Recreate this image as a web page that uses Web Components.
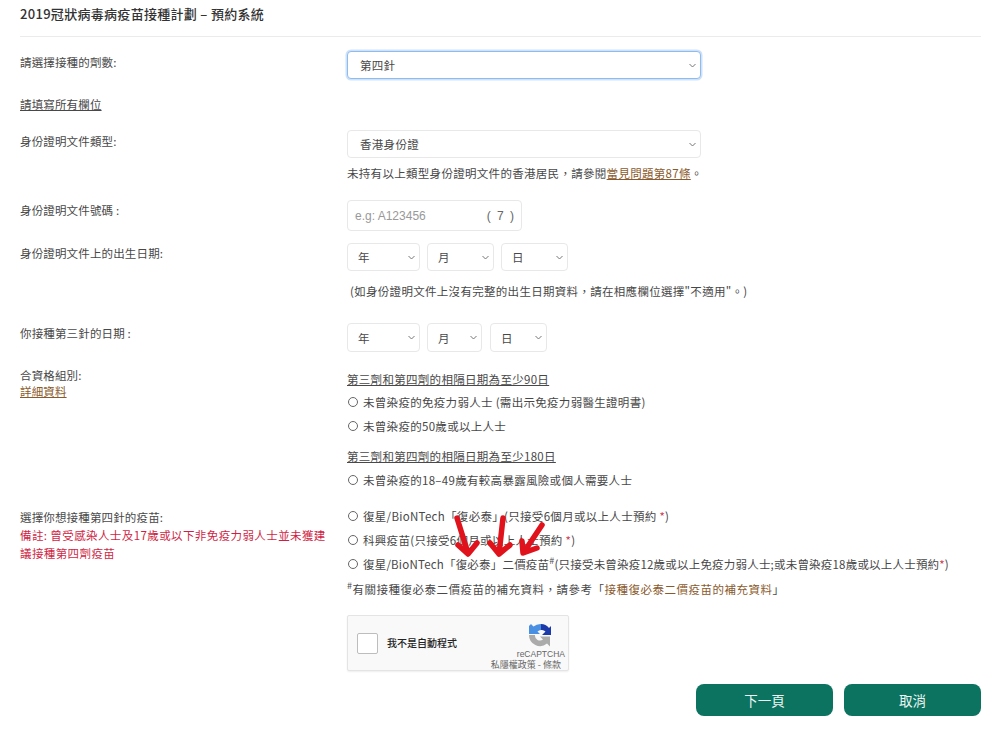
<!DOCTYPE html>
<html lang="zh-Hant">
<head>
<meta charset="utf-8">
<title>預約系統</title>
<style>
html, body { margin: 0; background: #fff; }
body { font: 11.5px/16px "Noto Sans CJK TC", "Noto Sans", sans-serif; color: #484848; }
</style>
</head>
<body>
<booking-page></booking-page>
<script>
class FormRow extends HTMLElement {
    constructor() {
        super();
        this.attachShadow({mode: "open"}).innerHTML = `
        <style>
            :host { display: grid; grid-template-columns: 327px 1fr; margin-top: var(--gap, 0); }
            .label { padding-top: var(--label-top, 0); letter-spacing: .15px; }
            .field { display: flex; flex-direction: column; min-width: 0; letter-spacing: .3px; }
        </style>
        <div class="label"><slot name="label"></slot></div>
        <div class="field"><slot></slot></div>`;
    }
}
customElements.define("form-row", FormRow);

class SelectBox extends HTMLElement {
    constructor() {
        super();
        this.attachShadow({mode: "open"}).innerHTML = `
        <style>
            :host {
                display: flex; align-items: center; justify-content: space-between; box-sizing: border-box;
                width: var(--w, 100%); height: var(--h, 28px); padding: 0 4px 0 var(--pad, 10px);
                border: 1px solid #e8e8e8; border-radius: 4px; background: #fff;
            }
            :host([focused]) { border-color: #8fbcf0; box-shadow: 0 0 0 1.5px #cfe2f8; }
            svg { width: 7px; height: 5px; fill: none; stroke: #777; stroke-width: 1; }
        </style>
        <slot></slot>
        <svg viewBox="0 0 7 5"><path d="M.5 1l3 3 3-3"/></svg>`;
    }
}
customElements.define("select-box", SelectBox);

class RadioOption extends HTMLElement {
    constructor() {
        super();
        this.attachShadow({mode: "open"}).innerHTML = `
        <style>
            :host { display: flex; align-items: center; gap: 5px; height: 24px; white-space: nowrap; }
            i { box-sizing: border-box; width: 10px; height: 10px; margin-left: 1px; border: 1px solid #666; border-radius: 50%; flex: none; }
        </style>
        <i></i><span><slot></slot></span>`;
    }
}
customElements.define("radio-option", RadioOption);

class CaptchaBox extends HTMLElement {
    constructor() {
        super();
        this.attachShadow({mode: "open"}).innerHTML = `
        <style>
            :host {
                display: flex; align-items: center; box-sizing: border-box; position: relative; letter-spacing: 0;
                width: 222px; height: 56px; padding-left: 9px;
                background: #f9f9f9; border: 1px solid #e4e4e4; border-radius: 2px; box-shadow: 0 1px 2px rgba(0,0,0,.07);
            }
            .check { box-sizing: border-box; width: 21px; height: 21px; background: #fff; border: 1px solid #bdbdbd; border-radius: 2px; }
            .text { margin-left: 9px; font-size: 10px; font-weight: 500; color: #222; }
            .brand { position: absolute; right: 3px; top: 7px; display: flex; flex-direction: column; align-items: flex-end; }
            svg { width: 24px; height: 24px; margin-right: 13px; }
            .name { font: 8.5px/10px "Liberation Sans", sans-serif; color: #666; margin-top: 2px; }
            .links { font-size: 9px; line-height: 12px; color: #666; margin-right: 4px; white-space: nowrap; }
        </style>
        <div class="check"></div>
        <div class="text">我不是自動程式</div>
        <div class="brand">
            <svg viewBox="0 0 24 24">
                <path d="M3 1l2.500 2.500A11 11 0 0 1 13 1v6a5 5 0 0 0-3.500 1.500L12 11H1V3z" fill="#4a90e2"/>
                <path d="M13 1a11 11 0 0 1 8 4l2-2v9H14l3.500-3.500A5 5 0 0 0 13 7z" fill="#1c3aa9"/>
                <path d="M1 12h6a5 5 0 0 0 8 4.500l-3-3h10v10l-3-3A11 11 0 0 1 1 12z" fill="#ababab"/>
            </svg>
            <div class="name">reCAPTCHA</div>
            <div class="links">私隱權政策 - 條款</div>
        </div>`;
    }
}
customElements.define("captcha-box", CaptchaBox);

class ActionButton extends HTMLElement {
    constructor() {
        super();
        this.attachShadow({mode: "open"}).innerHTML = `
        <style>
            :host {
                display: flex; align-items: center; justify-content: center; width: 137px; height: 32px;
                background: #0b7360; color: #eef6f4; border-radius: 8px; font-size: 13.5px;
            }
        </style>
        <slot></slot>`;
    }
}
customElements.define("action-button", ActionButton);

class BookingPage extends HTMLElement {
    constructor() {
        super();
        this.attachShadow({mode: "open"});
    }

    connectedCallback() {
        this.render();
    }

    render() {
        this.shadowRoot.innerHTML = `
        <style>
            :host { display: block; position: relative; box-sizing: border-box; width: 1000px; height: 736px; padding: 6px 19px 0 20px; overflow: hidden; }
            h1 { margin: 0; padding-bottom: 14px; border-bottom: 1px solid #ebebeb; font-size: 13px; letter-spacing: .3px; line-height: 16px; font-weight: 500; color: #333; }
            a { color: #8a5a2c; text-decoration: underline; }
            .dates { display: flex; gap: 7px; }
            .note { margin-top: 7px; white-space: nowrap; }
            .red { color: #cf1f45; letter-spacing: .4px; }
            .star { color: #d2384f; }
            .brown { color: #8a5a2c; }
            .tight { letter-spacing: .2px; }
            sup { font-size: 9px; line-height: 0; }
            .id {
                display: flex; justify-content: space-between; align-items: center; box-sizing: border-box;
                width: 175px; height: 31px; padding: 0 7px; border: 1px solid #e8e8e8; border-radius: 4px;
                color: #999; font-family: "Liberation Sans", sans-serif; font-size: 12px; letter-spacing: 0;
            }
            .paren { word-spacing: 3px; color: #666; }
            .actions { display: flex; justify-content: flex-end; gap: 11px; margin-top: 13px; }
            .arrows { position: absolute; left: 440px; top: 505px; width: 120px; height: 60px; fill: none; stroke: #e0131c; stroke-width: 5.500; stroke-linecap: round; stroke-linejoin: round; }
        </style>

        <h1>2019冠狀病毒病疫苗接種計劃 – 預約系統</h1>

        <form-row style="--gap:14px; --label-top:3px">
            <span slot="label">請選擇接種的劑數:</span>
            <select-box focused style="--w:354px; --pad:12px">第四針</select-box>
        </form-row>

        <form-row style="--gap:17px">
            <u slot="label">請填寫所有欄位</u>
        </form-row>

        <form-row style="--gap:18px; --label-top:3px">
            <span slot="label">身份證明文件類型:</span>
            <select-box style="--w:354px; --pad:12px">香港身份證</select-box>
            <div class="note">未持有以上類型身份證明文件的香港居民&#65292;請參閱<a>當見問題第87條</a>。</div>
        </form-row>

        <form-row style="--gap:19px; --label-top:2px">
            <span slot="label">身份證明文件號碼 :</span>
            <div class="id"><span>e.g: A123456</span><span class="paren">( 7 )</span></div>
        </form-row>

        <form-row style="--gap:12px; --label-top:2px">
            <span slot="label">身份證明文件上的出生日期:</span>
            <div class="dates">
                <select-box style="--w:73px">年</select-box>
                <select-box style="--w:67px">月</select-box>
                <select-box style="--w:67px">日</select-box>
            </div>
            <div class="note" style="margin-top:12px;padding-left:3px">(如身份證明文件上沒有完整的出生日期資料&#65292;請在相應欄位選擇"不適用"。)</div>
        </form-row>

        <form-row style="--gap:24px; --label-top:2px">
            <span slot="label">你接種第三針的日期 :</span>
            <div class="dates">
                <select-box style="--w:73px;--h:29px">年</select-box>
                <select-box style="--w:55px;--h:29px">月</select-box>
                <select-box style="--w:57px;--h:29px;margin-left:1px">日</select-box>
            </div>
        </form-row>

        <form-row style="--gap:15px">
            <div slot="label">合資格組別:<br><a>詳細資料</a></div>
            <div style="padding-top:4px">
                <u>第三劑和第四劑的相隔日期為至少90日</u>
                <radio-option style="margin-top:3px">未曾染疫的免疫力弱人士 (需出示免疫力弱醫生證明書)</radio-option>
                <radio-option>未曾染疫的50歲或以上人士</radio-option>
                <div style="margin-top:10px"><u>第三劑和第四劑的相隔日期為至少180日</u></div>
                <radio-option style="margin-top:4px">未曾染疫的18–49歲有較高暴露風險或個人需要人士</radio-option>
            </div>
        </form-row>

        <form-row style="--gap:12px; --label-top:4px">
            <div slot="label" style="line-height:18px">選擇你想接種第四針的疫苗:<br><span class="red">備註: 曾受感染人士及17歲或以下非免疫力弱人士並未獲建<br>議接種第四劑疫苗</span></div>
            <div>
                <radio-option>復星/BioNTech「復必泰」(只接受6個月或以上人士預約 <span class="star">*</span>)</radio-option>
                <radio-option>科興疫苗(只接受6個月或以上人士預約 <span class="star">*</span>)</radio-option>
                <radio-option class="tight">復星/BioNTech「復必泰」二價疫苗<sup>#</sup>(只接受未曾染疫12歲或以上免疫力弱人士;或未曾染疫18歲或以上人士預約<span class="star">*</span>)</radio-option>
                <div class="note" style="margin-top:5px;letter-spacing:.5px"><sup>#</sup>有關接種復必泰二價疫苗的補充資料&#65292;請參考「<span class="brown">接種復必泰二價疫苗的補充資料</span>」</div>
                <captcha-box style="margin-top:18px"></captcha-box>
            </div>
        </form-row>

        <div class="actions">
            <action-button>下一頁</action-button>
            <action-button>取消</action-button>
        </div>

        <svg class="arrows" viewBox="0 0 120 60">
            <path d="M17 13L28 48M18 40L28 49L37 38"/>
            <path d="M63 13L59 49M50 38L59 49L70 40"/>
            <path d="M102 20L84 47M82 36L83 48L97 43"/>
        </svg>`;
    }
}
customElements.define("booking-page", BookingPage);
</script>
</body>
</html>
